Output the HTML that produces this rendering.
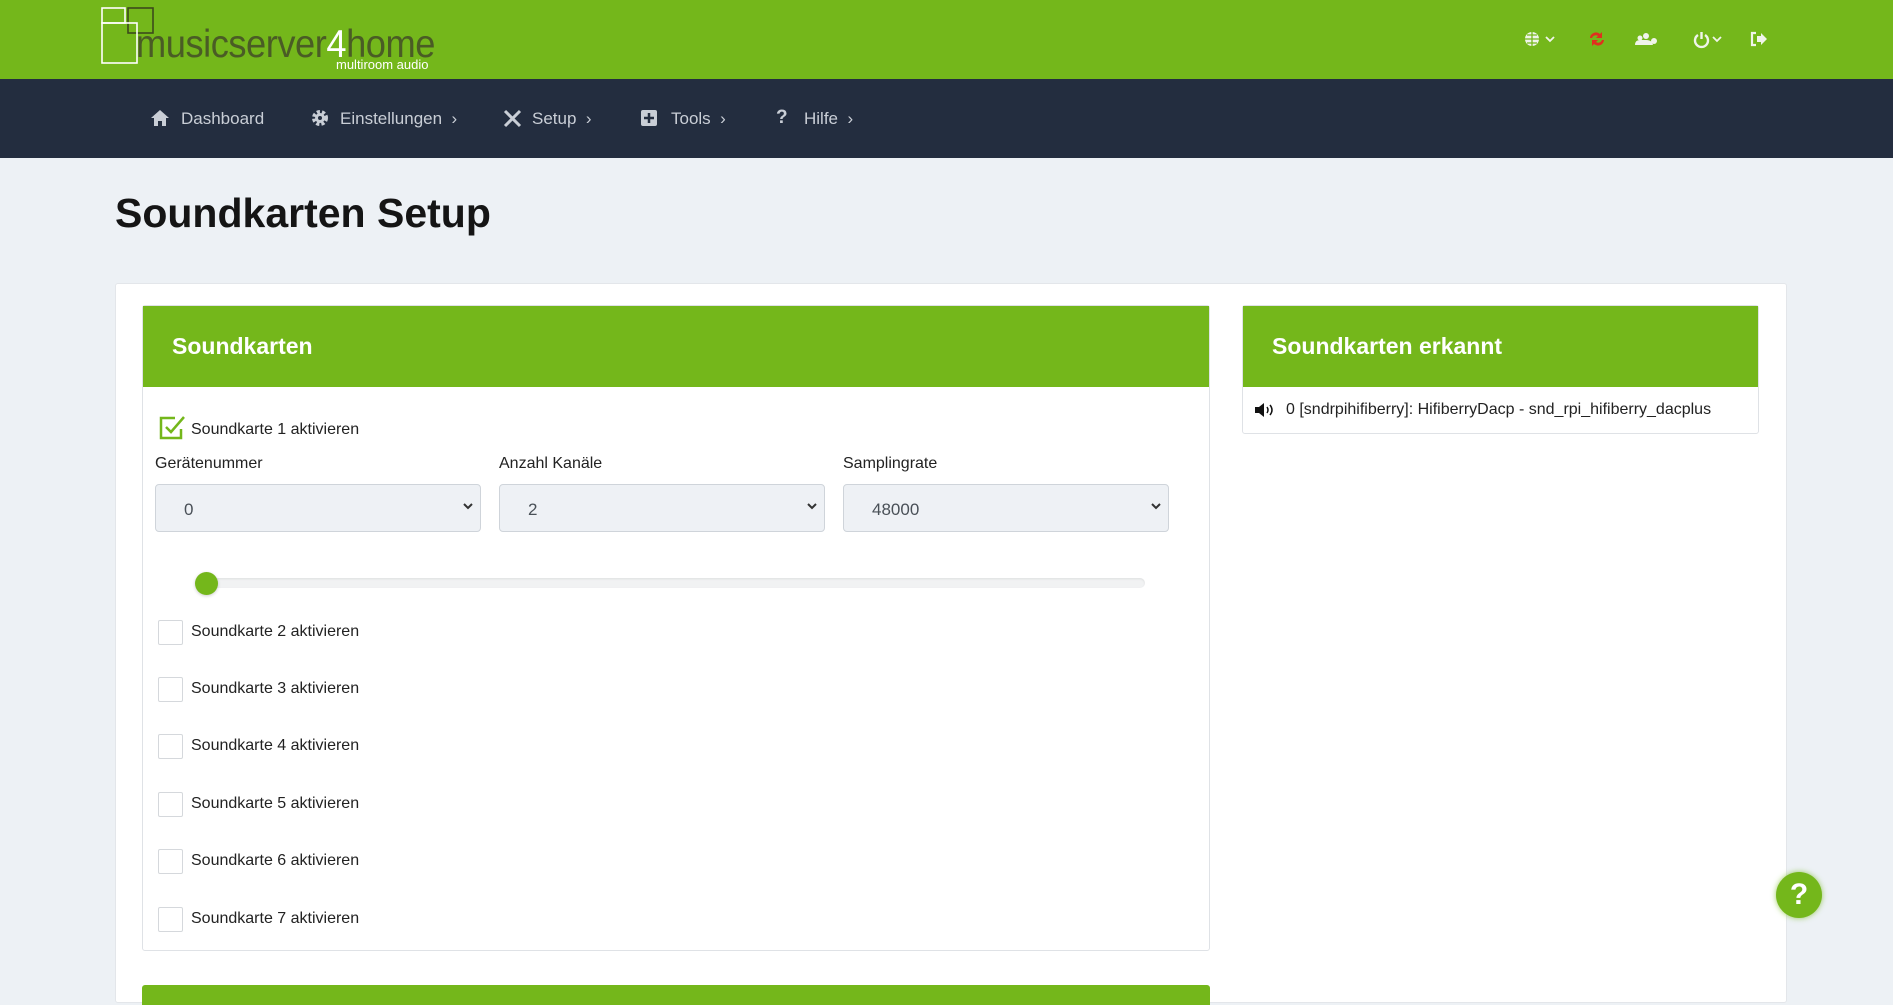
<!DOCTYPE html>
<html><head><meta charset="utf-8"><style>
*{box-sizing:border-box;margin:0;padding:0}
body{width:1893px;height:998px;overflow:hidden;background:#edf1f5;font-family:"Liberation Sans",Arial,sans-serif;position:relative;color:#212529}
.a{position:absolute}
.top{left:0;top:0;width:1893px;height:79px;background:#74b71b}
.nav{left:0;top:79px;width:1893px;height:79px;background:#232d3f}
.ni{top:109px;color:#c9ced6;font-size:17px;line-height:20px}
.title{left:115px;top:190px;font-size:41px;font-weight:bold;color:#151515}
.panel{left:115px;top:283px;width:1672px;height:720px;background:#fff;border:1px solid #e3e6ea;border-radius:3px}
.card{background:#fff;border:1px solid #dfe2e6;border-radius:3px}
.hdr{background:#74b71b;color:#fff;font-weight:bold;font-size:23px;padding-left:29px;line-height:81px;height:81px}
.lbl{font-size:16px;color:#222}
.cb{width:25px;height:25px;border:1px solid #d5d8dc;border-radius:2px;background:#fff}
.sel{height:48px;width:326px;background:#eef1f5;border:1px solid #cfd4da;border-radius:4px;font-size:17px;color:#495057;padding:15px 0 0 28px}
.sel svg{position:absolute;right:6px;top:17px}
</style></head><body>
<div class="a top"></div>
<svg class="a" style="left:100px;top:4px" width="60" height="62">
<rect x="2" y="4" width="23" height="15" fill="none" stroke="#fff" stroke-width="1.6"/>
<rect x="28" y="4" width="25" height="25" fill="none" stroke="#3c4a1c" stroke-width="1.6"/>
<rect x="2" y="19" width="35" height="40" fill="none" stroke="#fff" stroke-width="1.6"/>
</svg>
<div class="a" style="left:136px;top:22px;font-size:39px;letter-spacing:-0.5px;color:#4a5c25;line-height:46px;transform:scaleX(0.93);transform-origin:left">musicserver<span style="color:#fff">4</span>home</div>
<div class="a" style="left:336px;top:58px;font-size:13px;color:#fff;line-height:14px">multiroom audio</div>
<svg class="a" style="left:1522px;top:30px" width="270" height="20" fill="#f0f4ea">
<circle cx="10" cy="9" r="7"/><path d="M3 9h14M10 2v14M5 5h10M5 13h10" stroke="#74b71b" stroke-width="1.3"/>
<path d="M24 7l4 4 4-4" stroke="#f0f4ea" stroke-width="1.8" fill="none"/>
<path d="M68 8a6 6 0 0 1 10-4l2-2v6h-6l2-2a4 4 0 0 0-6 2zM82 10a6 6 0 0 1-10 4l-2 2v-6h6l-2 2a4 4 0 0 0 6-2z" fill="#e0301e"/>
<circle cx="124" cy="6" r="3"/><circle cx="118" cy="8" r="2.5"/><path d="M113 15q0-5 5-5t6 0q6 0 7 5z"/><circle cx="132" cy="11" r="3"/>
<path d="M176 5a6.5 6.5 0 1 0 7 0" stroke="#f0f4ea" stroke-width="2.4" fill="none"/><path d="M179.5 2v7" stroke="#f0f4ea" stroke-width="2.4"/>
<path d="M191 7l4 4 4-4" stroke="#f0f4ea" stroke-width="1.8" fill="none"/>
<path d="M234 3h-4v12h4" stroke="#f0f4ea" stroke-width="2.2" fill="none"/><path d="M235 6h4v-3l6 6-6 6v-3h-4z"/>
</svg>
<div class="a nav"></div>
<svg class="a" style="left:150px;top:109px" width="20" height="18" fill="#c9ced6"><path d="M1 9l9-8 9 8h-3v8h-4v-5h-4v5H4V9z"/></svg>
<div class="a ni" style="left:181px">Dashboard</div>
<svg class="a" style="left:311px;top:109px" width="18" height="18"><circle cx="9" cy="9" r="6" fill="none" stroke="#c9ced6" stroke-width="4" stroke-dasharray="3 2"/><circle cx="9" cy="9" r="5" fill="#c9ced6"/><circle cx="9" cy="9" r="2" fill="#232d3f"/></svg>
<div class="a ni" style="left:340px">Einstellungen &nbsp;›</div>
<svg class="a" style="left:503px;top:109px" width="19" height="19" stroke="#c9ced6" stroke-width="3"><path d="M2 2l15 15M17 2L2 17"/></svg>
<div class="a ni" style="left:532px">Setup &nbsp;›</div>
<svg class="a" style="left:641px;top:110px" width="16" height="16"><rect width="16" height="16" rx="2" fill="#c9ced6"/><path d="M8 3v10M3 8h10" stroke="#232d3f" stroke-width="2.5"/></svg>
<div class="a ni" style="left:671px">Tools &nbsp;›</div>
<div class="a ni" style="left:776px;font-weight:bold;font-size:19px;top:108px">?</div>
<div class="a ni" style="left:804px">Hilfe &nbsp;›</div>

<div class="a title">Soundkarten Setup</div>
<div class="a panel"></div>

<div class="a card" style="left:142px;top:305px;width:1068px;height:646px">
<div class="hdr">Soundkarten</div></div>
<svg class="a" style="left:158px;top:413px" width="30" height="30"><path d="M17 5H3v20h20v-9" fill="none" stroke="#74b71b" stroke-width="2.5"/><path d="M8 14l5 5 13-15" fill="none" stroke="#74b71b" stroke-width="2.5"/></svg>
<div class="a lbl" style="left:191px;top:421px">Soundkarte 1 aktivieren</div>
<div class="a lbl" style="left:155px;top:455px">Gerätenummer</div>
<div class="a lbl" style="left:499px;top:455px">Anzahl Kanäle</div>
<div class="a lbl" style="left:843px;top:455px">Samplingrate</div>
<div class="a sel" style="left:155px;top:484px">0<svg width="12" height="8"><path d="M2 2l4 4 4-4" stroke="#333" stroke-width="2" fill="none"/></svg></div>
<div class="a sel" style="left:499px;top:484px">2<svg width="12" height="8"><path d="M2 2l4 4 4-4" stroke="#333" stroke-width="2" fill="none"/></svg></div>
<div class="a sel" style="left:843px;top:484px">48000<svg width="12" height="8"><path d="M2 2l4 4 4-4" stroke="#333" stroke-width="2" fill="none"/></svg></div>
<div class="a" style="left:200px;top:578px;width:945px;height:10px;border-radius:5px;background:#f1f2f3;box-shadow:inset 0 1px 2px rgba(0,0,0,.08)"></div>
<div class="a" style="left:195px;top:572px;width:23px;height:23px;border-radius:50%;background:#74b71b;box-shadow:0 1px 3px rgba(0,0,0,.2)"></div>

<div class="a cb" style="left:158px;top:620px"></div><div class="a lbl" style="left:191px;top:623px">Soundkarte 2 aktivieren</div>
<div class="a cb" style="left:158px;top:677px"></div><div class="a lbl" style="left:191px;top:680px">Soundkarte 3 aktivieren</div>
<div class="a cb" style="left:158px;top:734px"></div><div class="a lbl" style="left:191px;top:737px">Soundkarte 4 aktivieren</div>
<div class="a cb" style="left:158px;top:792px"></div><div class="a lbl" style="left:191px;top:795px">Soundkarte 5 aktivieren</div>
<div class="a cb" style="left:158px;top:849px"></div><div class="a lbl" style="left:191px;top:852px">Soundkarte 6 aktivieren</div>
<div class="a cb" style="left:158px;top:907px"></div><div class="a lbl" style="left:191px;top:910px">Soundkarte 7 aktivieren</div>

<div class="a" style="left:142px;top:985px;width:1068px;height:20px;background:#74b71b;border-radius:3px 3px 0 0"></div>

<div class="a card" style="left:1242px;top:305px;width:517px;height:129px">
<div class="hdr">Soundkarten erkannt</div></div>
<svg class="a" style="left:1254px;top:402px" width="20" height="16"><path d="M1 5h4l5-4v14l-5-4H1z" fill="#111"/><path d="M13 5q2 3 0 6M16 3q4 5 0 10" stroke="#111" stroke-width="1.5" fill="none"/></svg>
<div class="a lbl" style="left:1286px;top:401px">0 [sndrpihifiberry]: HifiberryDacp - snd_rpi_hifiberry_dacplus</div>

<div class="a" style="left:1776px;top:872px;width:46px;height:46px;border-radius:50%;background:#74b71b;box-shadow:0 0 6px rgba(116,183,27,.7);color:#fff;font-weight:bold;font-size:30px;text-align:center;line-height:46px">?</div>
</body></html>
